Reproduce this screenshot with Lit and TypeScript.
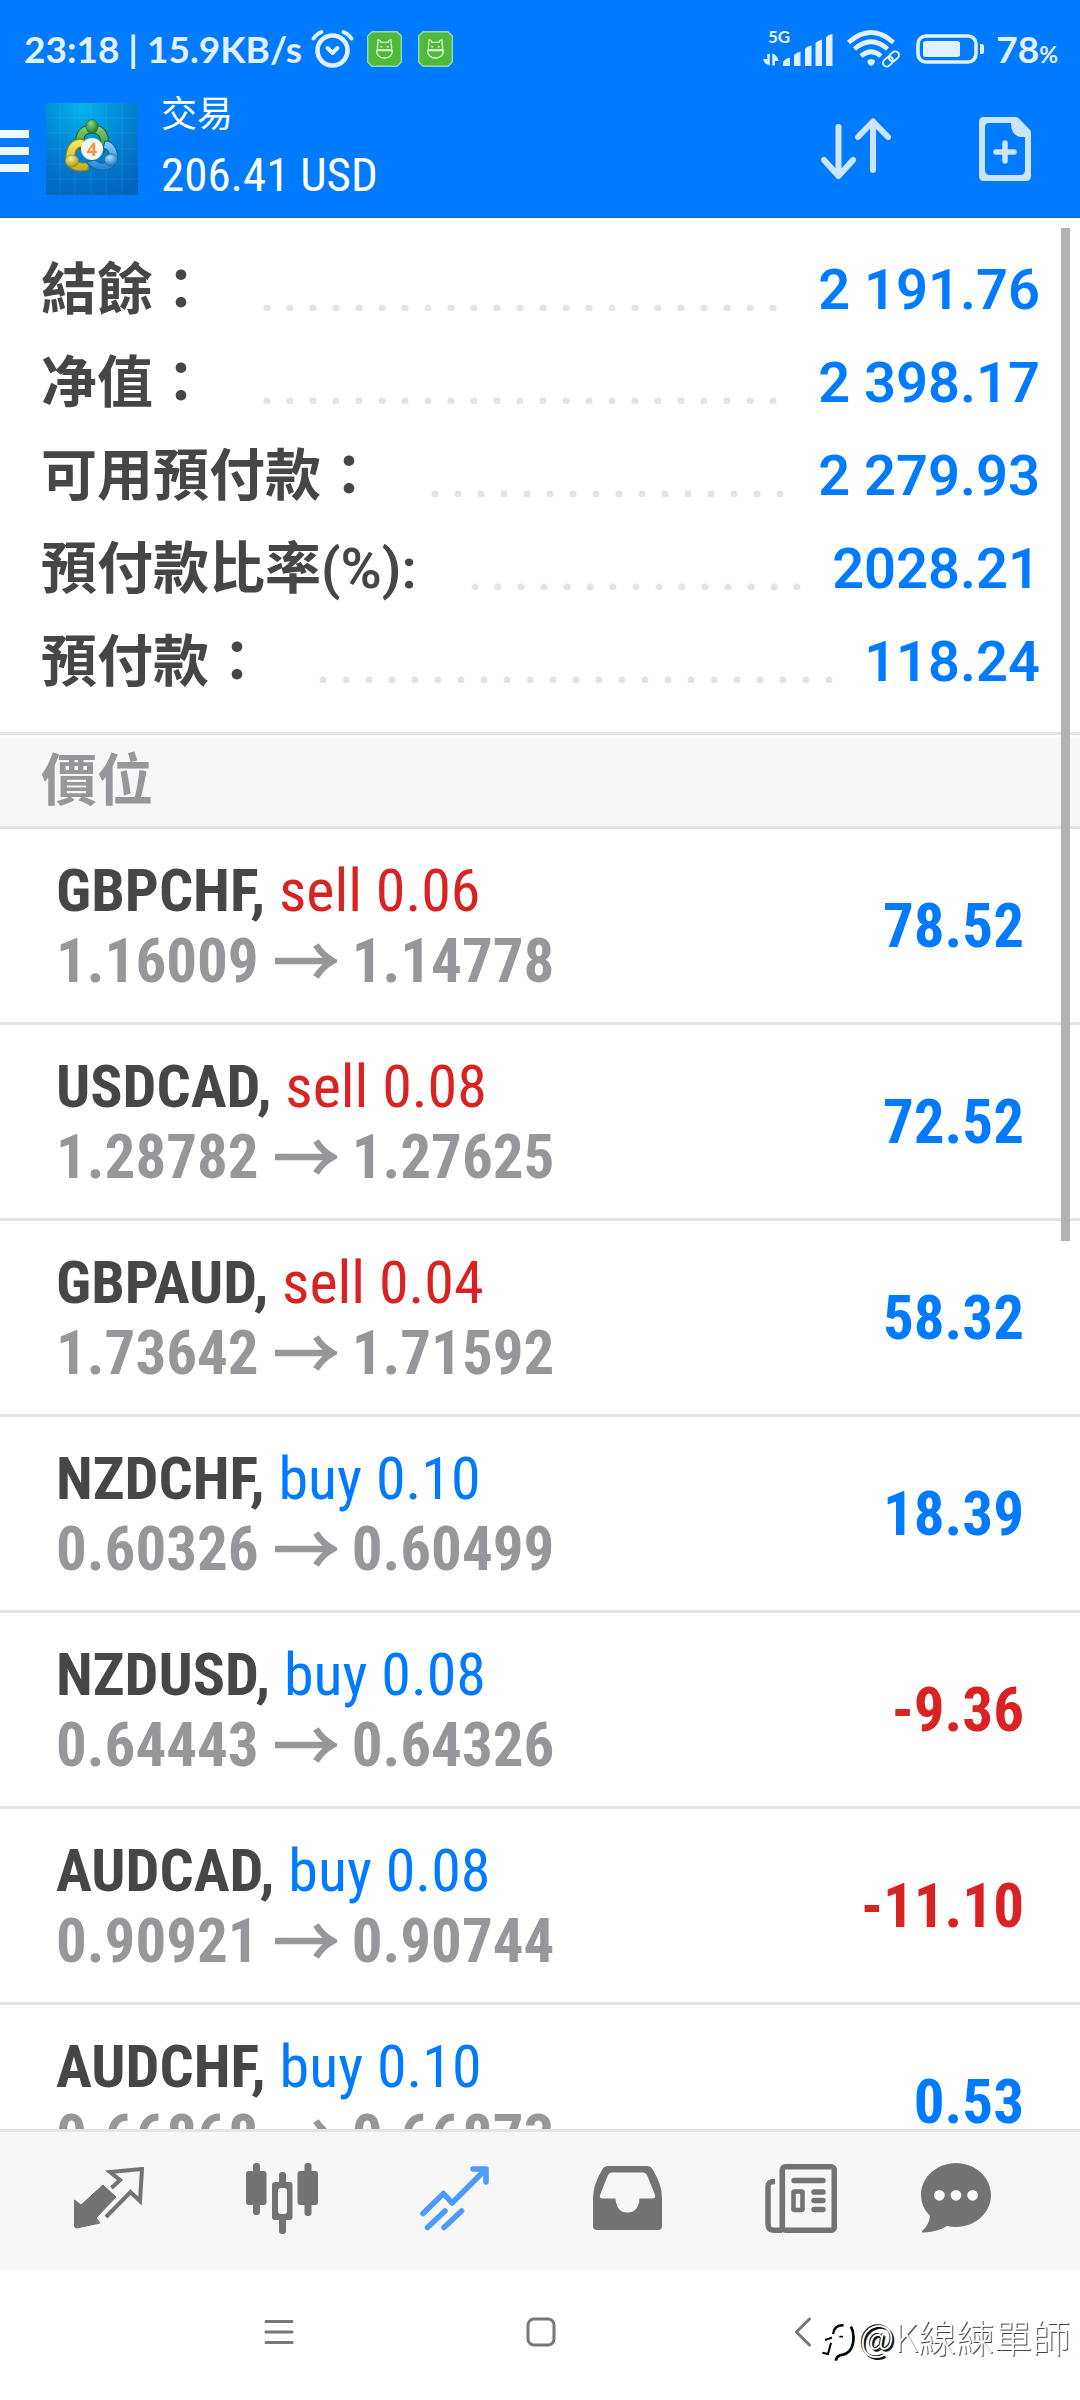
import { LitElement, html, css, svg } from "lit";
import { customElement, property } from "lit/decorators.js";
import { classMap } from "lit/directives/class-map.js";

interface Position {
  symbol: string;
  side: "buy" | "sell";
  volume: string;
  open: string;
  current: string;
  profit: string;
}

const ACCOUNT: [string, string][] = [
  ["結餘：", "2 191.76"],
  ["净值：", "2 398.17"],
  ["可用預付款：", "2 279.93"],
  ["預付款比率(%):", "2028.21"],
  ["預付款：", "118.24"],
];

const POSITIONS: Position[] = [
  { symbol: "GBPCHF", side: "sell", volume: "0.06", open: "1.16009", current: "1.14778", profit: "78.52" },
  { symbol: "USDCAD", side: "sell", volume: "0.08", open: "1.28782", current: "1.27625", profit: "72.52" },
  { symbol: "GBPAUD", side: "sell", volume: "0.04", open: "1.73642", current: "1.71592", profit: "58.32" },
  { symbol: "NZDCHF", side: "buy", volume: "0.10", open: "0.60326", current: "0.60499", profit: "18.39" },
  { symbol: "NZDUSD", side: "buy", volume: "0.08", open: "0.64443", current: "0.64326", profit: "-9.36" },
  { symbol: "AUDCAD", side: "buy", volume: "0.08", open: "0.90921", current: "0.90744", profit: "-11.10" },
  { symbol: "AUDCHF", side: "buy", volume: "0.10", open: "0.66868", current: "0.66873", profit: "0.53" },
];

@customElement("status-bar")
class StatusBar extends LitElement {
  static styles = css`
    :host {
      display: flex;
      justify-content: space-between;
      padding: 25px 22px 11px 24px;
      color: #e2f1ff;
      font: 700 37px/48px Lato, sans-serif;
    }
    .side {
      display: flex;
      align-items: center;
      white-space: nowrap;
    }
    svg {
      display: block;
      flex: none;
      overflow: visible;
    }
    .alarm { margin: 0 13px 0 9px; }
    .badge { margin-right: 16px; }
    .wifi { margin: 0 16px 0 13px; }
    .battery { margin-right: 11px; }
    .percent { font-size: 23px; line-height: 24px; }
    .net { font: 700 17px Lato, sans-serif; }
  `;

  private badge() {
    return html`<svg class="badge" width="35" height="36" viewBox="0 0 35 36" fill="none" aria-hidden="true">
      <path d="M5 .7H30L34.300 5V31L30 35.300H5L.7 31V5Z" fill="#50b93c" stroke="#8fdcb4" stroke-width="1.400" />
      <g stroke="#d9f6cf" stroke-width="1.300">
        <path d="M10.500 19C9.800 15 11.500 12.500 11 9Q13 8.500 14 11.300H21Q22 8.500 24 9C23.500 12.500 25.200 15 24.500 19Z" />
        <path d="M9.500 19.500H25.500C25.500 24 22 27 17.500 27S9.500 24 9.500 19.500Z" />
        <path d="M13.300 15.800H15.300M19.700 15.800H21.700" stroke-width="1.600" />
      </g>
    </svg>`;
  }

  render() {
    return html`
      <div class="side">
        <span>23:18 | 15.9KB/s</span>
        <svg class="alarm" width="43" height="40" viewBox="311 29 43 40" fill="none" stroke="currentColor" stroke-linecap="round" aria-hidden="true">
          <circle cx="332.500" cy="50.500" r="15" stroke-width="4.600" />
          <path d="M313.500 38.500Q316.500 34 321.500 32M343.500 32Q348.500 34 351.500 38.500" stroke-width="4" />
          <path d="M327.500 48L332.500 53L337.500 48" stroke-width="4" stroke-linejoin="round" />
        </svg>
        ${this.badge()}${this.badge()}
      </div>
      <div class="side">
        <svg width="71" height="38" viewBox="763 30 71 38" fill="currentColor" role="img" aria-label="5G">
          <text class="net" x="768" y="43">5G</text>
          <path d="M783 66V62Q785 58.500 790 57.500V66Z M794 66V55Q796 52.500 800.500 51.500V66Z M805 66V49Q807 46 811.500 45.500V66Z M815.500 66V43Q817.500 40.500 822 39.500V66Z M826 66V37.500Q828 34.500 832.500 34V66Z" />
          <path d="M767.300 54H769.800V65.500Q764 64 763 59H767.300Z M778.700 61H774.900V65.500H772.300V53.500Q777.500 55 778.700 61Z" />
        </svg>
        <svg class="wifi" width="53" height="40" viewBox="847 31 53 40" fill="none" stroke="currentColor" aria-hidden="true">
          <path d="M848.500 44.500Q871 24.500 893.500 44.500" stroke-width="4.600" />
          <path d="M854.500 51Q871 36.500 887.500 51" stroke-width="4.600" />
          <path d="M861 58Q871 49.500 881 58" stroke-width="4.600" />
          <path d="M867.500 62.500Q871 59.500 875 62.500Q875 66 871 68Q867 66 867.500 62.500Z" fill="currentColor" stroke="none" />
          <g stroke-width="2" transform="rotate(-42 891 61)">
            <rect x="881.500" y="57.300" width="11" height="7.400" rx="3.700" />
            <rect x="889.500" y="57.300" width="11" height="7.400" rx="3.700" />
          </g>
        </svg>
        <svg class="battery" width="69" height="30" viewBox="0 0 69 30" fill="none" aria-hidden="true">
          <rect x="2" y="2" width="58" height="26" rx="8" stroke="currentColor" stroke-width="3.600" />
          <rect x="7" y="7" width="37" height="16" rx="2.500" fill="currentColor" />
          <path d="M64 10H66Q68 10 68 12V18Q68 20 66 20H64Z" fill="currentColor" />
        </svg>
        <span>78<span class="percent">%</span></span>
      </div>
    `;
  }
}

@customElement("app-bar")
class AppBar extends LitElement {
  static styles = css`
    :host {
      display: flex;
      align-items: center;
      padding: 5px 49px 7px 0;
      border-bottom: 2px solid #0a6fe0;
    }
    button {
      display: block;
      flex: none;
      padding: 0;
      border: 0;
      background: none;
      color: #cce4ff;
      cursor: pointer;
    }
    svg { display: block; }
    .menu { color: #eef7ff; margin-right: 17px; }
    .titles { flex: 1; margin-left: 23px; min-width: 0; }
    h1 {
      margin: 0;
      color: #fff;
      font: 400 36px/52px "Roboto Condensed", "Noto Sans CJK TC", sans-serif;
    }
    .total {
      margin: 0;
      color: #fff;
      font: 400 47px/68px "Roboto Condensed", sans-serif;
    }
    .sort { margin-right: 88px; }
    .four { font: 700 18px "Open Sans", sans-serif; }
  `;

  render() {
    return html`
      <button class="menu" aria-label="選單">
        <svg width="29" height="46" viewBox="0 0 29 46" fill="currentColor">
          <path d="M0 4H29V12H0ZM0 21H29V29H0ZM0 38H29V46H0Z" />
        </svg>
      </button>
      <svg width="92" height="92" viewBox="0 0 92 92" aria-hidden="true">
        <defs>
          <radialGradient id="bg" cx=".4" cy=".05" r="1"><stop offset="0" stop-color="#04b4ea" /><stop offset=".5" stop-color="#0283d2" /><stop offset="1" stop-color="#0165bd" /></radialGradient>
          <linearGradient id="gr" x2="0" y2="1"><stop offset="0" stop-color="#8fd07c" /><stop offset="1" stop-color="#2d8a32" /></linearGradient>
          <linearGradient id="ye" x2="0" y2="1"><stop offset="0" stop-color="#f4ee62" /><stop offset="1" stop-color="#c2ae1f" /></linearGradient>
          <linearGradient id="bl" x2="0" y2="1"><stop offset="0" stop-color="#8fd3f5" /><stop offset="1" stop-color="#1b84cc" /></linearGradient>
          <radialGradient id="gh" cx=".4" cy=".3" r=".7"><stop offset="0" stop-color="#8fdc85" /><stop offset="1" stop-color="#19751f" /></radialGradient>
          <radialGradient id="yh" cx=".4" cy=".3" r=".7"><stop offset="0" stop-color="#f7f2a0" /><stop offset="1" stop-color="#a8931a" /></radialGradient>
          <radialGradient id="bh" cx=".4" cy=".3" r=".7"><stop offset="0" stop-color="#b0e0fa" /><stop offset="1" stop-color="#1877bd" /></radialGradient>
        </defs>
        <rect width="92" height="92" fill="url(#bg)" />
        <path d="M14 0V92M29 0V92M45 0V92M60 0V92M76 0V92M0 15H92M0 30H92M0 46H92M0 61H92M0 76H92" stroke="#5cc4f2" stroke-opacity=".25" stroke-width=".7" />
        <path d="M33 46C26 36 31 22 46 22S67 36 58 49L51 47C58 38 54 30 46 30S36 36 40 44Z" fill="url(#gr)" stroke="#17692a" stroke-width="1.200" />
        <path d="M38 37C30 34 21 40 20 52C18 66 30 70 42 67L43 59C34 62 28 58 29 51C30 45 34 43 39 44Z" fill="url(#ye)" stroke="#8f8117" stroke-width="1.200" />
        <path d="M59 38C68 38 73 48 71 57C68 70 50 71 40 59L49 57C55 62 62 61 63 54C64 49 61 46 57 45Z" fill="url(#bl)" stroke="#1265a2" stroke-width="1.200" />
        <ellipse cx="46" cy="23.500" rx="6" ry="7" fill="url(#gh)" stroke="#17692a" stroke-width=".6" />
        <ellipse cx="26" cy="58" rx="6.800" ry="6" fill="url(#yh)" stroke="#8f8117" stroke-width=".6" />
        <ellipse cx="65" cy="57" rx="6.800" ry="6" fill="url(#bh)" stroke="#1265a2" stroke-width=".6" />
        <circle cx="46" cy="46" r="11" fill="#f8f6f3" />
        <text class="four" x="46" y="53" text-anchor="middle" fill="#f2913d">4</text>
      </svg>
      <div class="titles">
        <h1>交易</h1>
        <p class="total">206.41 USD</p>
      </div>
      <button class="sort" aria-label="排序">
        <svg width="70" height="62" viewBox="0 0 70 62" fill="none" stroke="currentColor" stroke-width="6" stroke-linecap="round" stroke-linejoin="round">
          <path d="M17.500 9V57M3 42L17.500 58L32 42M52 52V4M37 19L52 3.500L67 19" />
        </svg>
      </button>
      <button aria-label="新訂單">
        <svg width="52" height="64" viewBox="0 0 52 64" fill="currentColor">
          <path fill-rule="evenodd" d="M5 0H37Q39 0 40 1.500L51 13Q52 14 52 16V59Q52 64 47 64H5Q0 64 0 59V5Q0 0 5 0ZM10 6Q6 6 6 10V53Q6 58 11 58H41Q46 58 46 53V20H41Q32 18 32 6Z" />
          <path d="M26 26V44M17 35H35" stroke="currentColor" stroke-width="5.500" stroke-linecap="round" />
        </svg>
      </button>
    `;
  }
}

@customElement("account-summary")
class AccountSummary extends LitElement {
  static styles = css`
    dl {
      margin: 0;
      padding: 26px 40px 23px 41px;
      border-bottom: 3px solid #e4e4e4;
    }
    .row {
      display: flex;
      align-items: center;
      height: 93px;
    }
    dt, dd {
      margin: 0;
      font: 600 56px/93px Roboto, "Noto Sans CJK TC", sans-serif;
      white-space: nowrap;
    }
    dt { color: #464646; }
    dd { color: #007aff; }
    .leader {
      flex: 1;
      height: 7px;
      margin: 34px 28px 0 54px;
      background: radial-gradient(circle at 4px 4px, #e4e4e4 3px, transparent 4px) 0 0 / 23px 7px repeat-x;
    }
  `;

  render() {
    return html`<dl>
      ${ACCOUNT.map(([label, value]) => html`<div class="row"><dt>${label}</dt><span class="leader" role="presentation"></span><dd>${value}</dd></div>`)}
    </dl>`;
  }
}

@customElement("position-row")
class PositionRow extends LitElement {
  @property({ attribute: false }) position!: Position;

  static styles = css`
    :host {
      display: flex;
      align-items: center;
      justify-content: space-between;
      height: 193px;
      padding: 0 56px;
      border-bottom: 3px solid #e4e4e4;
      font: 400 60px/70px "Roboto Condensed", sans-serif;
      white-space: nowrap;
    }
    .name { color: #464646; font-weight: 700; }
    .up { color: #007aff; }
    .down { color: #d92222; }
    .prices {
      display: flex;
      align-items: center;
      color: #96979b;
      font-size: 61px;
      font-weight: 700;
    }
    .prices svg { margin: 0 15px 0 16px; }
    .profit { font-size: 61px; font-weight: 700; }
  `;

  render() {
    const p = this.position;
    const gain = !p.profit.startsWith("-");
    return html`
      <div>
        <div>
          <span class="name">${p.symbol},</span>
          <span class=${classMap({ up: p.side === "buy", down: p.side === "sell" })}>${p.side} ${p.volume}</span>
        </div>
        <div class="prices">
          <span>${p.open}</span>
          <svg width="62" height="38" viewBox="0 0 62 38" fill="none" stroke="currentColor" stroke-width="7" role="img" aria-label="至">
            <path d="M0 19H58M41 3Q47 13 58 19Q47 25 41 35" stroke-width="6.500" />
          </svg>
          <span>${p.current}</span>
        </div>
      </div>
      <span class="profit ${classMap({ up: gain, down: !gain })}">${p.profit}</span>
    `;
  }
}

const TABS = [
  {
    label: "報價", width: 70, height: 62,
    art: svg`<path d="M29 18L42 30L22 51L26 56L3 61Q0 61 .5 58V33L7 38Z" fill="currentColor" stroke="currentColor" stroke-width="1" stroke-linejoin="round"/><path d="M37.500 21L46 13L36 5L68 2L66 34L56.500 25L32 50" fill="none" stroke="currentColor" stroke-width="4"/>`,
  },
  {
    label: "圖表", width: 72, height: 71,
    art: svg`<g fill="currentColor"><rect x="7" width="7" height="52" rx="3"/><rect y="8" width="20.500" height="34" rx="3"/><rect x="58.500" width="7" height="53" rx="3"/><rect x="51.500" y="8" width="20.500" height="34" rx="3"/><rect x="33" y="9" width="7" height="14" rx="3"/><rect x="33" y="54" width="7" height="17" rx="3"/><path fill-rule="evenodd" d="M29 19H44Q46.500 19 46.500 22V54Q46.500 57 44 57H29Q26 57 26 54V22Q26 19 29 19ZM35 25Q32 25 32 28V48Q32 51 35 51H38Q41 51 41 48V28Q41 25 38 25Z"/></g>`,
  },
  {
    label: "交易", width: 69, height: 65, active: true,
    art: svg`<path d="M3 47.500L23.500 27.500L32 37L65 4M53 3H66V16M7.500 61.500L25 45M24 61.500L41.500 45" fill="none" stroke="currentColor" stroke-width="5.500" stroke-linecap="round" stroke-linejoin="round"/>`,
  },
  {
    label: "歷史", width: 69, height: 64,
    art: svg`<path fill="currentColor" fill-rule="evenodd" d="M15 0H54Q58 0 60 4Q69 19 69 32V60Q69 64 65 64H4Q0 64 0 60V32Q0 19 9 4Q11 0 15 0ZM19 6.500Q16 6.500 15 9L7 29Q6 32.500 10 32.500H22.500Q23.500 46.500 34.500 46.500T46.500 32.500H59Q63 32.500 62 29L54 9Q53 6.500 50 6.500Z"/>`,
  },
  {
    label: "新聞", width: 72, height: 69,
    art: svg`<g fill="none" stroke="currentColor"><rect x="17.300" y="2.800" width="52" height="63.400" rx="3" stroke-width="5.600"/><path d="M10 17.500Q3 17 3 23V60Q3 66.200 9 66.200H17" stroke-width="5.400"/><path d="M29 16.500H58M49 28H58M49 36.500H58M49 45.500H58" stroke-width="5.400" stroke-linecap="round"/><rect x="28.500" y="27.500" width="9" height="18.500" rx="1" stroke-width="4.600"/></g>`,
  },
  {
    label: "訊息", width: 70, height: 70,
    art: svg`<path fill="currentColor" fill-rule="evenodd" d="M35 0C54 0 70 14 70 32S54 64 35 64Q30 64 26 63Q16 69 2 69.500Q0 69.500 1.500 67.500Q8 62 9 53Q0 44 0 32C0 14 16 0 35 0ZM13 32.300a5.400 5.400 0 1 0 10.800 0a5.400 5.400 0 1 0-10.800 0ZM29.600 32.300a5.400 5.400 0 1 0 10.800 0a5.400 5.400 0 1 0-10.800 0ZM46.200 32.300a5.400 5.400 0 1 0 10.800 0a5.400 5.400 0 1 0-10.800 0Z"/>`,
  },
];

@customElement("tab-bar")
class TabBar extends LitElement {
  static styles = css`
    nav {
      display: grid;
      grid-template-columns: repeat(5, 173fr) 138fr;
      height: 138px;
      padding: 0 55px 0 22px;
      border-top: 3px solid #e4e4e4;
      background: #f7f7f7;
    }
    button {
      display: flex;
      align-items: center;
      justify-content: center;
      padding: 0 0 6px;
      border: 0;
      background: none;
      color: #737373;
      cursor: pointer;
    }
    .active { color: #4a9cf8; }
  `;

  render() {
    return html`<nav aria-label="主選單">
      ${TABS.map(t => html`<button class=${classMap({ active: !!t.active })} aria-label=${t.label}>
        <svg width=${t.width} height=${t.height} viewBox="0 0 ${t.width} ${t.height}">${t.art}</svg>
      </button>`)}
    </nav>`;
  }
}

@customElement("system-nav")
class SystemNav extends LitElement {
  static styles = css`
    :host {
      display: block;
      position: relative;
      background: #fff;
    }
    nav {
      display: grid;
      grid-template-columns: repeat(3, 262fr);
      height: 124px;
      padding: 0 146px 6px 148px;
    }
    button {
      display: flex;
      align-items: center;
      justify-content: center;
      padding: 0;
      border: 0;
      background: none;
      color: #777;
      cursor: pointer;
    }
    .credit {
      position: absolute;
      right: 10px;
      bottom: 36px;
      display: flex;
      align-items: center;
      color: #fff;
      font: 300 38px/56px "Noto Sans CJK TC", sans-serif;
      text-shadow: 1px 1px 0 #444;
    }
    .at { text-shadow: 1px 1px 0 #000, 2px 2px 0 #222, -1px -1px 0 #222; }
    .credit svg { color: #000; margin: 12px 5px 0 0; }
  `;

  render() {
    return html`
      <nav aria-label="系統導覽">
        <button aria-label="最近使用"><svg width="30" height="26" viewBox="0 0 30 26"><path d="M2 2.500H28M2 13H28M2 23.500H28" stroke="currentColor" stroke-width="3" stroke-linecap="round" /></svg></button>
        <button aria-label="主畫面"><svg width="30" height="30" viewBox="0 0 30 30"><rect x="2" y="2" width="26" height="26" rx="6" fill="none" stroke="currentColor" stroke-width="3" /></svg></button>
        <button aria-label="返回"><svg width="18" height="30" viewBox="0 0 18 30"><path d="M15.500 2L2.500 15L15.500 28" fill="none" stroke="currentColor" stroke-width="3" stroke-linecap="round" /></svg></button>
      </nav>
      <div class="credit">
        <svg width="34" height="40" viewBox="118 74 102 120" fill="none" stroke="currentColor" aria-hidden="true">
          <path d="M186 84Q158 82 154 110" stroke-width="7" />
          <path d="M130 128L151 121M148 136L139 170L122 166" stroke-width="6" />
          <path d="M208 88Q220 110 213 142Q206 168 184 172Q164 174 163 190" stroke-width="8" />
          <path d="M173 118H184" stroke-width="5" />
        </svg>
        <span><span class="at">@</span>K線練單師</span>
      </div>
    `;
  }
}

@customElement("app-root")
class AppRoot extends LitElement {
  static styles = css`
    :host {
      display: flex;
      flex-direction: column;
      height: 100vh;
      background: #fff;
    }
    header { flex: none; background: #007aff; }
    .viewport {
      position: relative;
      flex: 1;
      min-height: 0;
      display: flex;
    }
    main {
      flex: 1;
      overflow-y: auto;
      scrollbar-width: none;
    }
    .thumb {
      position: absolute;
      top: 10px;
      right: 10px;
      width: 9px;
      height: 53%;
      background: #b2b2b2;
    }
    h2 {
      margin: 3px 0 0;
      padding: 0 41px 12px;
      border-bottom: 3px solid #e4e4e4;
      background: #f7f7f7;
      color: #96979b;
      font: 600 56px/76px "Noto Sans CJK TC", sans-serif;
    }
    ul { margin: 0; padding: 0; list-style: none; }
  `;

  render() {
    return html`
      <header>
        <status-bar></status-bar>
        <app-bar></app-bar>
      </header>
      <div class="viewport">
        <main>
          <account-summary></account-summary>
          <h2>價位</h2>
          <ul>
            ${POSITIONS.map(p => html`<li><position-row .position=${p}></position-row></li>`)}
          </ul>
        </main>
        <div class="thumb"></div>
      </div>
      <tab-bar></tab-bar>
      <system-nav></system-nav>
    `;
  }
}
